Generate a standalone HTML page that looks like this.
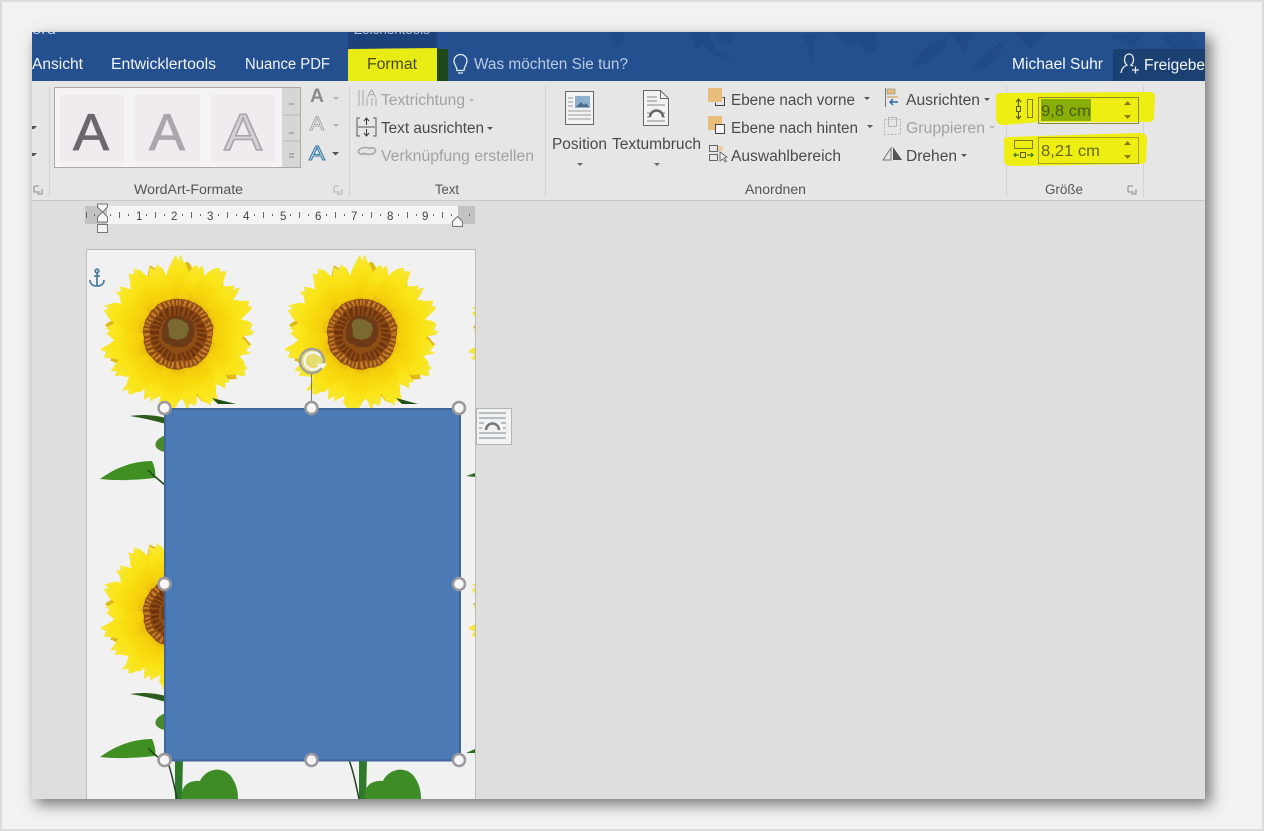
<!DOCTYPE html>
<html><head><meta charset="utf-8"><title>Word</title>
<style>
html,body{margin:0;padding:0;background:#f2f2f2;width:1264px;height:831px;overflow:hidden}
svg{display:block;position:absolute;left:0;top:0;filter:blur(.35px)}
text{font-family:"Liberation Sans",sans-serif;font-size:15.5px;fill:#4a4a4a}
</style></head><body>
<svg width="1264" height="831" viewBox="0 0 1264 831" xmlns="http://www.w3.org/2000/svg">
<defs>
<filter id="sh" x="-5%" y="-5%" width="110%" height="110%"><feGaussianBlur stdDeviation="7"/></filter>
<filter id="rough" x="-15%" y="-15%" width="130%" height="130%"><feTurbulence type="fractalNoise" baseFrequency=".09" numOctaves="2" seed="4" result="n"/><feDisplacementMap in="SourceGraphic" in2="n" scale="5" xChannelSelector="R" yChannelSelector="G"/></filter>
<linearGradient id="pet" x1="0" y1="1" x2="0" y2="0"><stop offset="0" stop-color="#d99a08"/><stop offset=".3" stop-color="#f5cf0c"/><stop offset=".7" stop-color="#fae414"/><stop offset="1" stop-color="#f6e83a"/></linearGradient>
<path id="p1" d="M-9-25C-16-50-11-70-3-80L1-76L4-81C11-70 16-50 9-25Z" fill="url(#pet)"/>
<path id="p2" d="M-9-25C-15-48-8-68 0-75C8-68 15-48 9-25Z" fill="#e0b818"/>
<g id="flower">
<use href="#p2" transform="rotate(8)"/><use href="#p2" transform="rotate(38)"/><use href="#p2" transform="rotate(68)"/><use href="#p2" transform="rotate(98)"/><use href="#p2" transform="rotate(128)"/><use href="#p2" transform="rotate(158)"/><use href="#p2" transform="rotate(188)"/><use href="#p2" transform="rotate(218)"/><use href="#p2" transform="rotate(248)"/><use href="#p2" transform="rotate(278)"/><use href="#p2" transform="rotate(308)"/><use href="#p2" transform="rotate(338)"/>
<use href="#p1"/><use href="#p1" transform="rotate(17) scale(.92)"/><use href="#p1" transform="rotate(34)"/><use href="#p1" transform="rotate(51) scale(.95)"/><use href="#p1" transform="rotate(68)"/><use href="#p1" transform="rotate(85) scale(.97)"/><use href="#p1" transform="rotate(102) scale(.94)"/><use href="#p1" transform="rotate(119)"/><use href="#p1" transform="rotate(136) scale(.9)"/><use href="#p1" transform="rotate(153)"/><use href="#p1" transform="rotate(170) scale(.95)"/><use href="#p1" transform="rotate(187)"/><use href="#p1" transform="rotate(204) scale(.93)"/><use href="#p1" transform="rotate(221)"/><use href="#p1" transform="rotate(238) scale(.96)"/><use href="#p1" transform="rotate(255)"/><use href="#p1" transform="rotate(272) scale(.93)"/><use href="#p1" transform="rotate(289)"/><use href="#p1" transform="rotate(306) scale(.95)"/><use href="#p1" transform="rotate(323)"/><use href="#p1" transform="rotate(340) scale(.92)"/>
<circle r="36" fill="#8f4d14"/>
<circle r="32" fill="none" stroke="#c97f2e" stroke-width="6" stroke-dasharray="2 2.5"/>
<circle r="24" fill="none" stroke="#6e3410" stroke-width="8" stroke-dasharray="3 2"/>
<circle cy="-3" r="17" fill="#6b3a14"/>
<circle cy="-5" r="11" fill="#7a6a30"/>
</g>
<g id="leaves">
<path d="M100 479C112 470 130 461 152 461C156 470 156 476 154 478C138 480 118 481 100 479Z" fill="#3f8f22"/>
<path d="M152 474L166 486M156 478L148 470" stroke="#1d4a12" stroke-width="1.500" fill="none"/>
<path d="M130 416C142 414 155 415 166 418L166 424C152 420 142 418 130 416Z" fill="#2a5c1c"/>
<path d="M166 435C158 438 154 442 156 447C158 450 162 452 166 452Z" fill="#4a8a2e"/>
</g>
<clipPath id="pg"><rect x="87" y="250" width="388" height="549"/></clipPath>
<clipPath id="win"><rect x="32" y="32" width="1173" height="49"/></clipPath>
</defs>

<!-- outer frame -->
<rect width="1264" height="831" fill="#f2f2f2"/>
<rect x="0" y="0" width="1264" height="2" fill="#dcdcdc"/>
<rect x="0" y="0" width="2" height="831" fill="#dcdcdc"/>
<rect x="1262" y="0" width="2" height="831" fill="#dcdcdc"/>
<rect x="0" y="829" width="1264" height="2" fill="#dcdcdc"/>

<!-- shadow -->
<rect x="36" y="37" width="1175" height="768" fill="#7c7c7c" filter="url(#sh)"/>

<!-- window -->
<rect x="32" y="32" width="1173" height="767" fill="#dedede"/>
<rect x="32" y="32" width="1173" height="49" fill="#24508f"/>

<!-- title pattern -->
<g fill="#214a88">
<path d="M610 32h16l-6 10-3 6-3-7Z"/><path d="M690 32h18l8 18 18 8-20-2-10-12-8 6Z"/><path d="M715 32h16l3 12-14-2Z"/>
<path d="M800 36l18-4-4 10-3 24-3-22Z"/><path d="M833 32h42l2 20-10 2-8-12-14 2Z"/>
<path d="M912 66C916 52 930 42 948 38C944 54 932 64 912 66Z"/><path d="M950 32h24l-10 20Z"/>
<path d="M972 72C978 58 990 48 1004 42C1000 58 990 68 972 72Z"/><path d="M1014 32h32l-16 18Z"/>
<path d="M1110 36l34-4-10 16Z"/><path d="M1160 36l30-4 8 16-24 2Z"/>
</g>

<!-- tabs -->
<rect x="348" y="32" width="89" height="17" fill="#1c4279"/>
<g clip-path="url(#win)">
<text x="354" y="34" textLength="76" lengthAdjust="spacingAndGlyphs" style="fill:#aebfd8;font-size:13px">Zeichentools</text>
<text x="32" y="34" textLength="24" lengthAdjust="spacingAndGlyphs" style="fill:#c8d4e6;font-size:13px">ord</text>
</g>
<rect x="437" y="49" width="11" height="32" fill="#1f481a"/>
<path d="M348 50Q348 49 350 49L437 48V81H348Z" fill="#e9ec14"/>
<text x="32" y="69" textLength="51" lengthAdjust="spacingAndGlyphs" style="fill:#f1f4f8">Ansicht</text>
<text x="111" y="69" textLength="105" lengthAdjust="spacingAndGlyphs" style="fill:#f1f4f8">Entwicklertools</text>
<text x="245" y="69" textLength="85" lengthAdjust="spacingAndGlyphs" style="fill:#f1f4f8">Nuance PDF</text>
<text x="367" y="69" textLength="50" lengthAdjust="spacingAndGlyphs" style="fill:#4a4a1a">Format</text>
<path d="M457 70.500C457 66 454 65 454 61A6.500 6.500 0 0 1 467 61C467 65 464 66 464 70.500ZM458 73h5" fill="none" stroke="#e6ecf4" stroke-width="1.300"/>
<text x="474" y="69" textLength="154" lengthAdjust="spacingAndGlyphs" style="fill:#b9cbe4">Was möchten Sie tun?</text>
<text x="1012" y="69" textLength="91" lengthAdjust="spacingAndGlyphs" style="fill:#f4f6fa">Michael Suhr</text>
<rect x="1113" y="49" width="92" height="32" fill="#1b4072"/>
<path d="M1121 73C1122 67 1125 66 1127 65C1123 62 1124 54 1129 54C1134 54 1135 62 1131 65L1133 66M1132 70h7M1135.500 66.500v7" fill="none" stroke="#e8edf5" stroke-width="1.300"/>
<text x="1144" y="70" textLength="61" lengthAdjust="spacingAndGlyphs" style="fill:#f4f6fa">Freigebe</text>

<!-- ribbon -->
<rect x="32" y="81" width="1173" height="119" fill="#e6e6e6"/>
<rect x="32" y="200" width="1173" height="1" fill="#c8c8c8"/>
<g fill="#d2d2d2">
<rect x="49" y="86" width="1" height="111"/><rect x="349" y="86" width="1" height="111"/><rect x="545" y="86" width="1" height="111"/><rect x="1006" y="86" width="1" height="111"/><rect x="1143" y="86" width="1" height="111"/>
</g>
<path d="M32 126h5l-3 3-2 0ZM32 153h5l-3 3-2 0Z" fill="#555"/>
<path d="M34 186v6h6M34 186h5M42 189v5h-5" fill="none" stroke="#888"/>

<!-- wordart gallery -->
<rect x="54.500" y="87.500" width="246" height="80" fill="#f5f3f5" stroke="#b0a8a0"/>
<rect x="60" y="95" width="64" height="67" fill="#efebef"/>
<rect x="135" y="95" width="65" height="67" fill="#efebef"/>
<rect x="211" y="95" width="64" height="67" fill="#efebef"/>
<text x="73" y="150" textLength="36" lengthAdjust="spacingAndGlyphs" style="font-size:52px;fill:#6d666c;stroke:#6d666c;stroke-width:.8">A</text>
<text x="149" y="150" textLength="36" lengthAdjust="spacingAndGlyphs" style="font-size:52px;fill:#aba6ab;stroke:#aba6ab;stroke-width:.8">A</text>
<text x="224" y="150" textLength="38" lengthAdjust="spacingAndGlyphs" style="font-size:52px;fill:#d4d0d6;stroke:#a8a4a8;stroke-width:1.500">A</text>
<rect x="282" y="88" width="18" height="79" fill="#d6d6d6"/>
<path d="M282 115h18M282 141h18" stroke="#bcbcbc"/>
<path d="M289 104h5M289 133h5M289 154h5M289 157h5" stroke="#a0a0a0" stroke-width="1.500"/>
<text x="310" y="102" textLength="14" lengthAdjust="spacingAndGlyphs" style="font-size:19px;fill:#8a8a8a;font-weight:bold">A</text>
<text x="310" y="130" textLength="14" lengthAdjust="spacingAndGlyphs" style="font-size:19px;fill:#f0f0f0;stroke:#999;stroke-width:.7">A</text>
<text x="309" y="160" textLength="16" lengthAdjust="spacingAndGlyphs" style="font-size:20px;fill:#cfe3ee;stroke:#3b7ea6;stroke-width:1">A</text>
<path d="M333 97h6l-3 3ZM333 124h6l-3 3Z" fill="#b0b0b0"/><path d="M332 152h7l-3.500 3.500Z" fill="#555"/>
<text x="134" y="194" textLength="109" lengthAdjust="spacingAndGlyphs" style="font-size:13.500px;fill:#555">WordArt-Formate</text>
<path d="M334 186v6h6M334 186h5M342 189v5h-5" fill="none" stroke="#b0b0b0"/>

<!-- text group -->
<path d="M359 90v16M363 90v16M367 98v8M372 98v8M376 98v8" stroke="#a8a8a8" fill="none"/>
<text x="367" y="97" textLength="9" lengthAdjust="spacingAndGlyphs" style="font-size:11px;fill:#a8a8a8">A</text>
<text x="381" y="105" textLength="84" lengthAdjust="spacingAndGlyphs" style="fill:#a2a2a2">Textrichtung</text>
<path d="M469 99h5l-2.500 2.500Z" fill="#b0b0b0"/>
<path d="M360 118h-3v18h3M373 118h3v18h-3M358 127h17" fill="none" stroke="#555"/>
<path d="M366.500 125v-6M364 121l2.500-3 2.500 3M366.500 129v6M364 133l2.500 3 2.500-3" fill="none" stroke="#3a3a3a"/>
<text x="381" y="133" textLength="103" lengthAdjust="spacingAndGlyphs">Text ausrichten</text>
<path d="M487 127h6l-3 3Z" fill="#555"/>
<path d="M359 150c2-3 8-3 12-1M375 152c-2 3-8 3-12 1M359 150c-2 3 2 5 5 4M375 152c2-3-2-5-5-4" fill="none" stroke="#a8a8a8" stroke-width="1.600"/>
<text x="381" y="161" textLength="153" lengthAdjust="spacingAndGlyphs" style="fill:#a2a2a2">Verknüpfung erstellen</text>
<text x="435" y="194" textLength="24" lengthAdjust="spacingAndGlyphs" style="font-size:13.500px;fill:#555">Text</text>

<!-- position / textumbruch -->
<rect x="565.500" y="91.500" width="28" height="33" fill="#f2f2f2" stroke="#666"/>
<rect x="575" y="96" width="15" height="12" fill="#8fb0cc"/>
<path d="M576 107l5-5 3 3 2-2 3 4Z" fill="#4c6d8a"/>
<path d="M568 98h5M568 102h5M568 106h5M568 111h23M568 115h23M568 119h23" stroke="#999"/>
<text x="552" y="149" textLength="55" lengthAdjust="spacingAndGlyphs">Position</text>
<path d="M577 163h6l-3 3Z" fill="#666"/>
<path d="M643.500 90.500h17l8 8v27h-25Z" fill="#f2f2f2" stroke="#666"/>
<path d="M660.500 90.500v8h8" fill="none" stroke="#666"/>
<path d="M647 97h10M647 101h10M647 105h18M647 121h18M647 117h3M662 117h3M647 113h3M662 113h3" stroke="#888"/>
<path d="M650 117a6.500 6.500 0 0 1 13 0" fill="none" stroke="#666" stroke-width="2.500"/>
<text x="612" y="149" textLength="89" lengthAdjust="spacingAndGlyphs">Textumbruch</text>
<path d="M654 163h6l-3 3Z" fill="#666"/>

<!-- anordnen -->
<rect x="708" y="88" width="14" height="14" fill="#e8bd7c"/>
<path d="M722.500 97.500h2v8h-9v-3" fill="none" stroke="#444"/>
<rect x="708" y="116" width="14" height="14" fill="#e8bd7c"/>
<rect x="715.500" y="124.500" width="9" height="9" fill="#f5f5f5" stroke="#444"/>
<rect x="709.500" y="145.500" width="8" height="6" fill="none" stroke="#666"/>
<rect x="709.500" y="154.500" width="8" height="6" fill="none" stroke="#666"/>
<rect x="718" y="146" width="5" height="5" fill="#e8cfa0"/>
<path d="M720 152l0 9 2.500-2 3 3 1-1-2.500-3 3-1Z" fill="#f0f0f0" stroke="#555" stroke-width=".8"/>
<text x="731" y="105" textLength="124" lengthAdjust="spacingAndGlyphs">Ebene nach vorne</text>
<text x="731" y="133" textLength="127" lengthAdjust="spacingAndGlyphs">Ebene nach hinten</text>
<text x="731" y="161" textLength="110" lengthAdjust="spacingAndGlyphs">Auswahlbereich</text>
<path d="M864 97h6l-3 3ZM867 125h6l-3 3Z" fill="#555"/>
<text x="745" y="194" textLength="61" lengthAdjust="spacingAndGlyphs" style="font-size:13.500px;fill:#555">Anordnen</text>

<path d="M885.500 88v19" stroke="#777"/>
<rect x="887" y="89" width="8" height="5" fill="#e8bd7c" stroke="#888" stroke-width=".6"/>
<rect x="887" y="96" width="11" height="2" fill="#d8c090"/>
<path d="M898 102h-8M893 99l-3 3 3 3" fill="none" stroke="#2e6da8" stroke-width="1.400"/>
<text x="906" y="105" textLength="74" lengthAdjust="spacingAndGlyphs">Ausrichten</text>
<path d="M984 98h6l-3 3Z" fill="#555"/>
<rect x="884.500" y="119.500" width="16" height="15" fill="none" stroke="#b4b4b4" stroke-dasharray="2 1.500"/>
<rect x="888.500" y="117.500" width="8" height="9" fill="none" stroke="#b4b4b4"/>
<text x="906" y="133" textLength="79" lengthAdjust="spacingAndGlyphs" style="fill:#a2a2a2">Gruppieren</text>
<path d="M989 126h6l-3 3Z" fill="#b8b8b8"/>
<path d="M883 160l8-12v12Z" fill="none" stroke="#777"/><path d="M893 147l9 13h-9Z" fill="#555"/>
<text x="906" y="161" textLength="51" lengthAdjust="spacingAndGlyphs">Drehen</text>
<path d="M961 154h6l-3 3Z" fill="#555"/>

<!-- size group with marker highlights -->
<path d="M996 98Q995 93 1002 93L1150 92Q1155 92 1155 97L1154 117Q1154 122 1148 122L1040 122L1004 125Q996 125 996 118Z" fill="#eeee12"/>
<path d="M1004 141Q1003 137 1010 137L1038 136L1140 133Q1147 133 1147 139L1146 160Q1146 164 1140 164L1012 166Q1004 166 1004 160Z" fill="#eeee12"/>
<rect x="1041" y="99" width="50" height="22" fill="#88ae08"/>
<rect x="1038.500" y="97.500" width="100" height="26" fill="none" stroke="#8d8d22"/>
<rect x="1038.500" y="137.500" width="100" height="26" fill="none" stroke="#a6a61e"/>
<rect x="1027.500" y="99.500" width="5" height="18" fill="none" stroke="#7d7d20"/>
<path d="M1018.500 106v-6M1016 102l2.500-3 2.500 3M1018.500 112v6M1016 116l2.500 3 2.500-3" fill="none" stroke="#5d5d10" stroke-width="1.200"/>
<rect x="1016.500" y="106.500" width="4" height="5" fill="none" stroke="#5d5d10"/>
<rect x="1014.500" y="140.500" width="18" height="8" fill="none" stroke="#7d7d20"/>
<path d="M1014 155h5M1016 153l-2 2 2 2M1027 155h6M1031 153l2 2-2 2" fill="none" stroke="#3f7a22" stroke-width="1.200"/>
<rect x="1020.500" y="152.500" width="5" height="5" fill="none" stroke="#5d5d10"/>
<text x="1041" y="116" textLength="50" lengthAdjust="spacingAndGlyphs" style="fill:#4e5a10">9,8 cm</text>
<text x="1041" y="156" textLength="59" lengthAdjust="spacingAndGlyphs" style="fill:#66661a">8,21 cm</text>
<path d="M1124 105l3.500-4 3.500 4ZM1124 115l3.500 4 3.500-4ZM1124 145l3.500-4 3.500 4ZM1124 155l3.500 4 3.500-4Z" fill="#8a7a10"/>
<text x="1045" y="194" textLength="38" lengthAdjust="spacingAndGlyphs" style="font-size:13.500px;fill:#555">Größe</text>
<path d="M1128 186v6h6M1128 186h5M1136 189v5h-5" fill="none" stroke="#888"/>

<!-- ruler -->
<rect x="85" y="206" width="390" height="18" fill="#f4f4f4"/>
<rect x="85" y="206" width="22" height="18" fill="#c2c2c2"/>
<rect x="458" y="206" width="17" height="18" fill="#c2c2c2"/>
<text x="136" y="220" style="font-size:11.500px;fill:#444">1</text><text x="171" y="220" style="font-size:11.500px;fill:#444">2</text><text x="207" y="220" style="font-size:11.500px;fill:#444">3</text><text x="243" y="220" style="font-size:11.500px;fill:#444">4</text><text x="280" y="220" style="font-size:11.500px;fill:#444">5</text><text x="315" y="220" style="font-size:11.500px;fill:#444">6</text><text x="351" y="220" style="font-size:11.500px;fill:#444">7</text><text x="387" y="220" style="font-size:11.500px;fill:#444">8</text><text x="422" y="220" style="font-size:11.500px;fill:#444">9</text>
<path d="M86.500 212v6M94.500 214v2M110.500 214v2M119.500 212v6M128.500 214v2M146.500 214v2M155.500 212v6M164.500 214v2M182.500 214v2M191.500 212v6M200.500 214v2M218.500 214v2M227.500 212v6M236.500 214v2M254.500 214v2M263.500 212v6M272.500 214v2M290.500 214v2M299.500 212v6M308.500 214v2M326.500 214v2M335.500 212v6M344.500 214v2M362.500 214v2M371.500 212v6M380.500 214v2M398.500 214v2M407.500 212v6M416.500 214v2M433.500 214v2M442.500 212v6M451.500 214v2M469.500 214v2" stroke="#666" fill="none"/>
<path d="M97.500 204h10v3l-5 5 5 5v5h-10v-5l5-5-5-5Z" fill="#f4f4f4" stroke="#777"/>
<rect x="97.500" y="224.500" width="10" height="8" fill="#f4f4f4" stroke="#777"/>
<path d="M452.500 226.500v-5l5-5 5 5v5Z" fill="#f4f4f4" stroke="#777"/>

<!-- page -->
<rect x="86" y="249" width="390" height="550" fill="#bcbcbc"/>
<rect x="87" y="250" width="388" height="549" fill="#f1f1f1"/>
<g clip-path="url(#pg)">
<use href="#flower" transform="translate(178 334) scale(.98)" filter="url(#rough)"/>
<use href="#flower" transform="translate(362 334) scale(.98)" filter="url(#rough)"/>
<use href="#flower" transform="translate(546 336) scale(.98)" filter="url(#rough)"/>
<use href="#flower" transform="translate(178 613) scale(.98)" filter="url(#rough)"/>
<use href="#flower" transform="translate(546 613) scale(.98)" filter="url(#rough)"/>
<path d="M212 398l24 6-18 0Z M396 398l22 6-16 0Z" fill="#1f4f18"/>
<use href="#leaves"/>
<use href="#leaves" transform="translate(0 278)"/>
<path d="M466 476l9-3v4ZM466 753l9-4v4Z" fill="#2e6a20"/>
<path d="M175 760h8l-1 40h-7Z" fill="#2f7a2a"/>
<path d="M359 760h8l-1 40h-7Z" fill="#2f7a2a"/>
<path d="M167 760c4 10 7 24 10 39M349 760c4 10 7 24 10 39" fill="none" stroke="#23402a" stroke-width="1.500"/>
<path d="M182 799C180 785 190 780 200 781C205 770 220 765 230 775C238 785 238 795 238 799Z" fill="#3e8c26"/>
<path d="M365 799C363 785 373 780 383 781C388 770 403 765 413 775C421 785 421 795 421 799Z" fill="#3e8c26"/>
</g>

<!-- anchor -->
<g fill="none" stroke="#4f7f9e" stroke-width="1.800">
<circle cx="97" cy="271" r="1.800"/><path d="M97 273v13M90 280c0 4 3 6 7 6s7-2 7-6M94 276h6"/>
</g>

<!-- rotate handle -->
<path d="M311.500 373v35" stroke="#7a7a7a" stroke-width="1"/>
<circle cx="312" cy="361" r="12" fill="#e6dc70" stroke="#a0a0a0" stroke-width="2.500"/>
<path d="M320 356a8.500 8.500 0 1 0 1 8" fill="none" stroke="#f4f4f4" stroke-width="2.500"/>
<path d="M316 364l11-1-4 6Z" fill="#f4f4f4"/>

<!-- blue shape -->
<rect x="165" y="409" width="295" height="351.500" fill="#4c7ab5" stroke="#41669b" stroke-width="2"/>

<!-- handles -->
<g fill="#f6f6f6" stroke="#9a9a9e" stroke-width="2.500">
<circle cx="164.500" cy="408" r="6"/><circle cx="311.500" cy="408" r="6"/><circle cx="459" cy="408" r="6"/>
<circle cx="164.500" cy="584" r="6"/><circle cx="459" cy="584" r="6"/>
<circle cx="164.500" cy="760" r="6"/><circle cx="311.500" cy="760" r="6"/><circle cx="459" cy="760" r="6"/>
</g>

<!-- layout options button -->
<rect x="476.500" y="408.500" width="35" height="36" fill="#f2f2f2" stroke="#b4b4b4"/>
<path d="M479 413h27M479 418h27M479 438h27M479 433h27M479 423h5M501 423h5M479 428h3M503 428h3" stroke="#7a8a96"/>
<path d="M486 430a6.500 6.500 0 0 1 13 0" fill="none" stroke="#777" stroke-width="2.500"/>
</svg>
</body></html>
